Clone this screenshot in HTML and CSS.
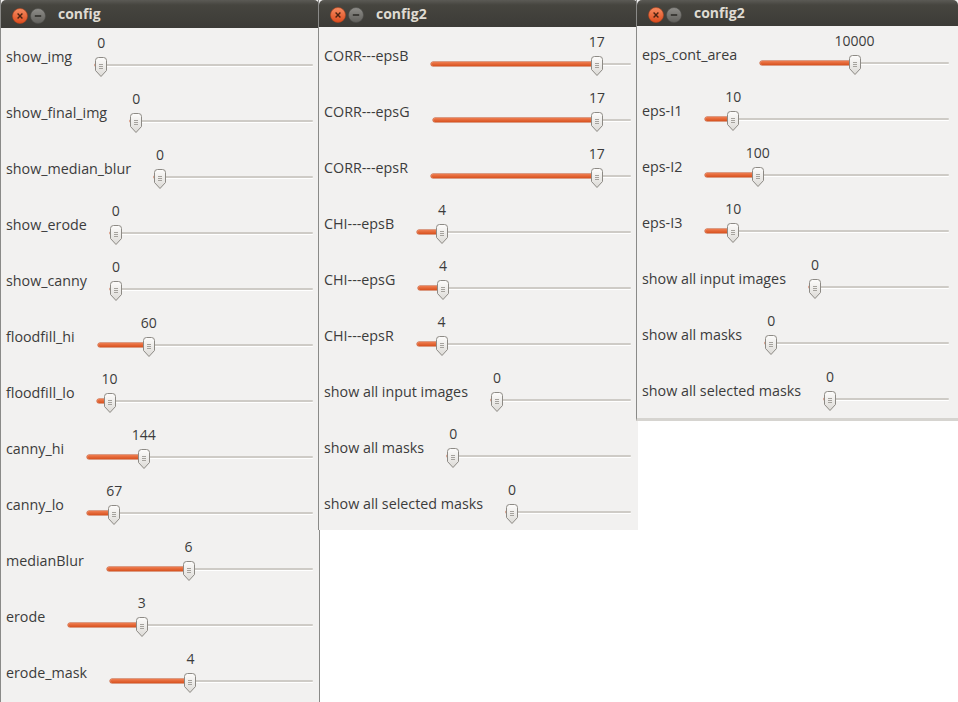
FILE: index.html
```html
<!DOCTYPE html>
<html>
<head>
<meta charset="utf-8">
<title>config</title>
<link rel="stylesheet" href="styles.css">
</head>
<body>
<svg class="defs" width="0" height="0" aria-hidden="true">
  <defs>
    <linearGradient id="tg" x1="0" y1="0" x2="0" y2="1">
      <stop offset="0" stop-color="#fdfcfb"/>
      <stop offset="1" stop-color="#dcdad6"/>
    </linearGradient>
    <linearGradient id="cg" x1="0" y1="0" x2="0" y2="1">
      <stop offset="0" stop-color="#f68c62"/>
      <stop offset="1" stop-color="#dc4b1d"/>
    </linearGradient>
    <linearGradient id="mg" x1="0" y1="0" x2="0" y2="1">
      <stop offset="0" stop-color="#8e8d89"/>
      <stop offset="1" stop-color="#61605c"/>
    </linearGradient>
    <symbol id="th" viewBox="0 0 12 20">
      <path d="M0.5 3.5a3 3 0 0 1 3-3h5a3 3 0 0 1 3 3v10L6 19.5 0.5 13.5z" fill="url(#tg)" stroke="#8d8a85"/>
      <path d="M4 7.5h4M4 9.5h4M4 11.5h4" stroke="#a5a29d" stroke-width="1"/>
    </symbol>
    <symbol id="cl" viewBox="0 0 16 16">
      <circle cx="8" cy="8" r="7.5" fill="url(#cg)" stroke="#b2431c" stroke-width="0.6"/>
      <path d="M5.6 5.6l4.8 4.8M10.4 5.6l-4.8 4.8" stroke="#4a2312" stroke-width="1.4"/>
    </symbol>
    <symbol id="mn" viewBox="0 0 16 16">
      <circle cx="8" cy="8" r="7.5" fill="url(#mg)" stroke="#4e4d49" stroke-width="0.6"/>
      <path d="M4.8 8h6.4" stroke="#2f2e2a" stroke-width="1.6"/>
    </symbol>
  </defs>
</svg>

<div class="desk">

  <section class="win w1">
    <header class="bar">
      <svg class="btn"><use href="#cl"/></svg>
      <svg class="btn"><use href="#mn"/></svg>
      <span class="title">config</span>
    </header>
    <div class="row"><span class="lbl">show_img</span><div class="slider"><div class="fill" style="--f:0"></div><div class="thumb"><span class="val">0</span><svg width="12" height="20"><use href="#th"/></svg></div><div class="rest"></div></div></div>
    <div class="row"><span class="lbl">show_final_img</span><div class="slider"><div class="fill" style="--f:0"></div><div class="thumb"><span class="val">0</span><svg width="12" height="20"><use href="#th"/></svg></div><div class="rest"></div></div></div>
    <div class="row"><span class="lbl">show_median_blur</span><div class="slider"><div class="fill" style="--f:0"></div><div class="thumb"><span class="val">0</span><svg width="12" height="20"><use href="#th"/></svg></div><div class="rest"></div></div></div>
    <div class="row"><span class="lbl">show_erode</span><div class="slider"><div class="fill" style="--f:0"></div><div class="thumb"><span class="val">0</span><svg width="12" height="20"><use href="#th"/></svg></div><div class="rest"></div></div></div>
    <div class="row"><span class="lbl">show_canny</span><div class="slider"><div class="fill" style="--f:0"></div><div class="thumb"><span class="val">0</span><svg width="12" height="20"><use href="#th"/></svg></div><div class="rest"></div></div></div>
    <div class="row"><span class="lbl">floodfill_hi</span><div class="slider"><div class="fill" style="--f:0.222"></div><div class="thumb"><span class="val">60</span><svg width="12" height="20"><use href="#th"/></svg></div><div class="rest"></div></div></div>
    <div class="row"><span class="lbl">floodfill_lo</span><div class="slider"><div class="fill" style="--f:0.03"></div><div class="thumb"><span class="val">10</span><svg width="12" height="20"><use href="#th"/></svg></div><div class="rest"></div></div></div>
    <div class="row"><span class="lbl">canny_hi</span><div class="slider"><div class="fill" style="--f:0.237"></div><div class="thumb"><span class="val">144</span><svg width="12" height="20"><use href="#th"/></svg></div><div class="rest"></div></div></div>
    <div class="row"><span class="lbl">canny_lo</span><div class="slider"><div class="fill" style="--f:0.10"></div><div class="thumb"><span class="val">67</span><svg width="12" height="20"><use href="#th"/></svg></div><div class="rest"></div></div></div>
    <div class="row"><span class="lbl">medianBlur</span><div class="slider"><div class="fill" style="--f:0.39"></div><div class="thumb"><span class="val">6</span><svg width="12" height="20"><use href="#th"/></svg></div><div class="rest"></div></div></div>
    <div class="row"><span class="lbl">erode</span><div class="slider"><div class="fill" style="--f:0.29"></div><div class="thumb"><span class="val">3</span><svg width="12" height="20"><use href="#th"/></svg></div><div class="rest"></div></div></div>
    <div class="row"><span class="lbl">erode_mask</span><div class="slider"><div class="fill" style="--f:0.39"></div><div class="thumb"><span class="val">4</span><svg width="12" height="20"><use href="#th"/></svg></div><div class="rest"></div></div></div>
  </section>

  <section class="win w2">
    <header class="bar">
      <svg class="btn"><use href="#cl"/></svg>
      <svg class="btn"><use href="#mn"/></svg>
      <span class="title">config2</span>
    </header>
    <div class="row"><span class="lbl">CORR---epsB</span><div class="slider"><div class="fill" style="--f:0.85"></div><div class="thumb"><span class="val">17</span><svg width="12" height="20"><use href="#th"/></svg></div><div class="rest"></div></div></div>
    <div class="row"><span class="lbl">CORR---epsG</span><div class="slider"><div class="fill" style="--f:0.85"></div><div class="thumb"><span class="val">17</span><svg width="12" height="20"><use href="#th"/></svg></div><div class="rest"></div></div></div>
    <div class="row"><span class="lbl">CORR---epsR</span><div class="slider"><div class="fill" style="--f:0.85"></div><div class="thumb"><span class="val">17</span><svg width="12" height="20"><use href="#th"/></svg></div><div class="rest"></div></div></div>
    <div class="row"><span class="lbl">CHI---epsB</span><div class="slider"><div class="fill" style="--f:0.093"></div><div class="thumb"><span class="val">4</span><svg width="12" height="20"><use href="#th"/></svg></div><div class="rest"></div></div></div>
    <div class="row"><span class="lbl">CHI---epsG</span><div class="slider"><div class="fill" style="--f:0.093"></div><div class="thumb"><span class="val">4</span><svg width="12" height="20"><use href="#th"/></svg></div><div class="rest"></div></div></div>
    <div class="row"><span class="lbl">CHI---epsR</span><div class="slider"><div class="fill" style="--f:0.093"></div><div class="thumb"><span class="val">4</span><svg width="12" height="20"><use href="#th"/></svg></div><div class="rest"></div></div></div>
    <div class="row"><span class="lbl">show all input images</span><div class="slider"><div class="fill" style="--f:0"></div><div class="thumb"><span class="val">0</span><svg width="12" height="20"><use href="#th"/></svg></div><div class="rest"></div></div></div>
    <div class="row"><span class="lbl">show all masks</span><div class="slider"><div class="fill" style="--f:0"></div><div class="thumb"><span class="val">0</span><svg width="12" height="20"><use href="#th"/></svg></div><div class="rest"></div></div></div>
    <div class="row"><span class="lbl">show all selected masks</span><div class="slider"><div class="fill" style="--f:0"></div><div class="thumb"><span class="val">0</span><svg width="12" height="20"><use href="#th"/></svg></div><div class="rest"></div></div></div>
  </section>

  <section class="win w3">
    <header class="bar">
      <svg class="btn"><use href="#cl"/></svg>
      <svg class="btn"><use href="#mn"/></svg>
      <span class="title">config2</span>
    </header>
    <div class="row"><span class="lbl">eps_cont_area</span><div class="slider"><div class="fill" style="--f:0.5"></div><div class="thumb"><span class="val">10000</span><svg width="12" height="20"><use href="#th"/></svg></div><div class="rest"></div></div></div>
    <div class="row"><span class="lbl">eps-I1</span><div class="slider"><div class="fill" style="--f:0.095"></div><div class="thumb"><span class="val">10</span><svg width="12" height="20"><use href="#th"/></svg></div><div class="rest"></div></div></div>
    <div class="row"><span class="lbl">eps-I2</span><div class="slider"><div class="fill" style="--f:0.2"></div><div class="thumb"><span class="val">100</span><svg width="12" height="20"><use href="#th"/></svg></div><div class="rest"></div></div></div>
    <div class="row"><span class="lbl">eps-I3</span><div class="slider"><div class="fill" style="--f:0.095"></div><div class="thumb"><span class="val">10</span><svg width="12" height="20"><use href="#th"/></svg></div><div class="rest"></div></div></div>
    <div class="row"><span class="lbl">show all input images</span><div class="slider"><div class="fill" style="--f:0"></div><div class="thumb"><span class="val">0</span><svg width="12" height="20"><use href="#th"/></svg></div><div class="rest"></div></div></div>
    <div class="row"><span class="lbl">show all masks</span><div class="slider"><div class="fill" style="--f:0"></div><div class="thumb"><span class="val">0</span><svg width="12" height="20"><use href="#th"/></svg></div><div class="rest"></div></div></div>
    <div class="row"><span class="lbl">show all selected masks</span><div class="slider"><div class="fill" style="--f:0"></div><div class="thumb"><span class="val">0</span><svg width="12" height="20"><use href="#th"/></svg></div><div class="rest"></div></div></div>
  </section>

</div>
</body>
</html>
```

FILE: styles.css
```css
html, body {
  margin: 0;
  padding: 0;
  background: #ffffff;
}

body {
  font-family: "Open Sans", "Noto Sans", sans-serif;
  color: #3c3c3c;
}

.defs {
  position: absolute;
  width: 0;
  height: 0;
  overflow: hidden;
}

.desk {
  position: relative;
  width: 958px;
  height: 702px;
  overflow: hidden;
}

.win {
  position: absolute;
  top: 0;
  box-sizing: border-box;
  background: #f2f1f0;
  border-left: 1px solid #8a8a88;
  overflow: hidden;
}

.w1 {
  left: 0;
  width: 320px;
  height: 702px;
  border-right: 1px solid #8a8a88;
}

.w2 {
  left: 318px;
  width: 320px;
  height: 530px;
}

.w3 {
  left: 636px;
  width: 322px;
  border-bottom: 3px solid #d6d4d0;
}

.bar {
  display: flex;
  align-items: center;
  box-sizing: border-box;
  height: 28px;
  padding: 3px 0 0 11px;
  background: linear-gradient(#5b5a55, #46453f 5px, #3c3b37);
  border-radius: 5px 5px 0 0;
}

.w2 .bar { height: 27px; }
.w3 .bar { height: 26px; }

.btn {
  display: block;
  flex: none;
  width: 16px;
  height: 16px;
}

.btn + .btn { margin-left: 2px; }

.title {
  margin-left: 12px;
  margin-top: -3px;
  font-size: 14px;
  font-weight: 700;
  line-height: 20px;
  color: #dfdbd2;
}

.row {
  display: flex;
  height: 56px;
  padding: 0 6px 0 5px;
}

.w2 .row { padding-right: 7px; }
.w3 .row { padding-right: 9px; }

.lbl {
  flex: none;
  padding-top: 19px;
  font-size: 14.3px;
  line-height: 20px;
  white-space: nowrap;
  color: #3c3c3c;
}

.slider {
  flex: 1;
  display: flex;
  align-items: flex-start;
  margin-left: 23px;
  padding-top: 29px;
}

.fill {
  flex: none;
  width: calc(var(--f) * (100% - 12px) + 6px);
  margin-right: -6px;
  margin-top: 6px;
  height: 4px;
  border-radius: 2px;
  background: linear-gradient(#ef7d50, #d8521f);
  box-shadow: 0 0 0 0.5px #c2481b;
}

.thumb {
  position: relative;
  flex: none;
  width: 12px;
  height: 20px;
}

.thumb svg { display: block; }

.val {
  position: absolute;
  left: 50%;
  top: -24px;
  transform: translateX(-50%);
  font-size: 14px;
  line-height: 20px;
  white-space: nowrap;
  color: #3c3c3c;
}

.rest {
  flex: 1;
  margin-left: -6px;
  margin-top: 7px;
  height: 2px;
  border-radius: 0 2px 2px 0;
  background: #cecbc6;
  box-shadow: 0 1px 0 #ffffff;
}
```
